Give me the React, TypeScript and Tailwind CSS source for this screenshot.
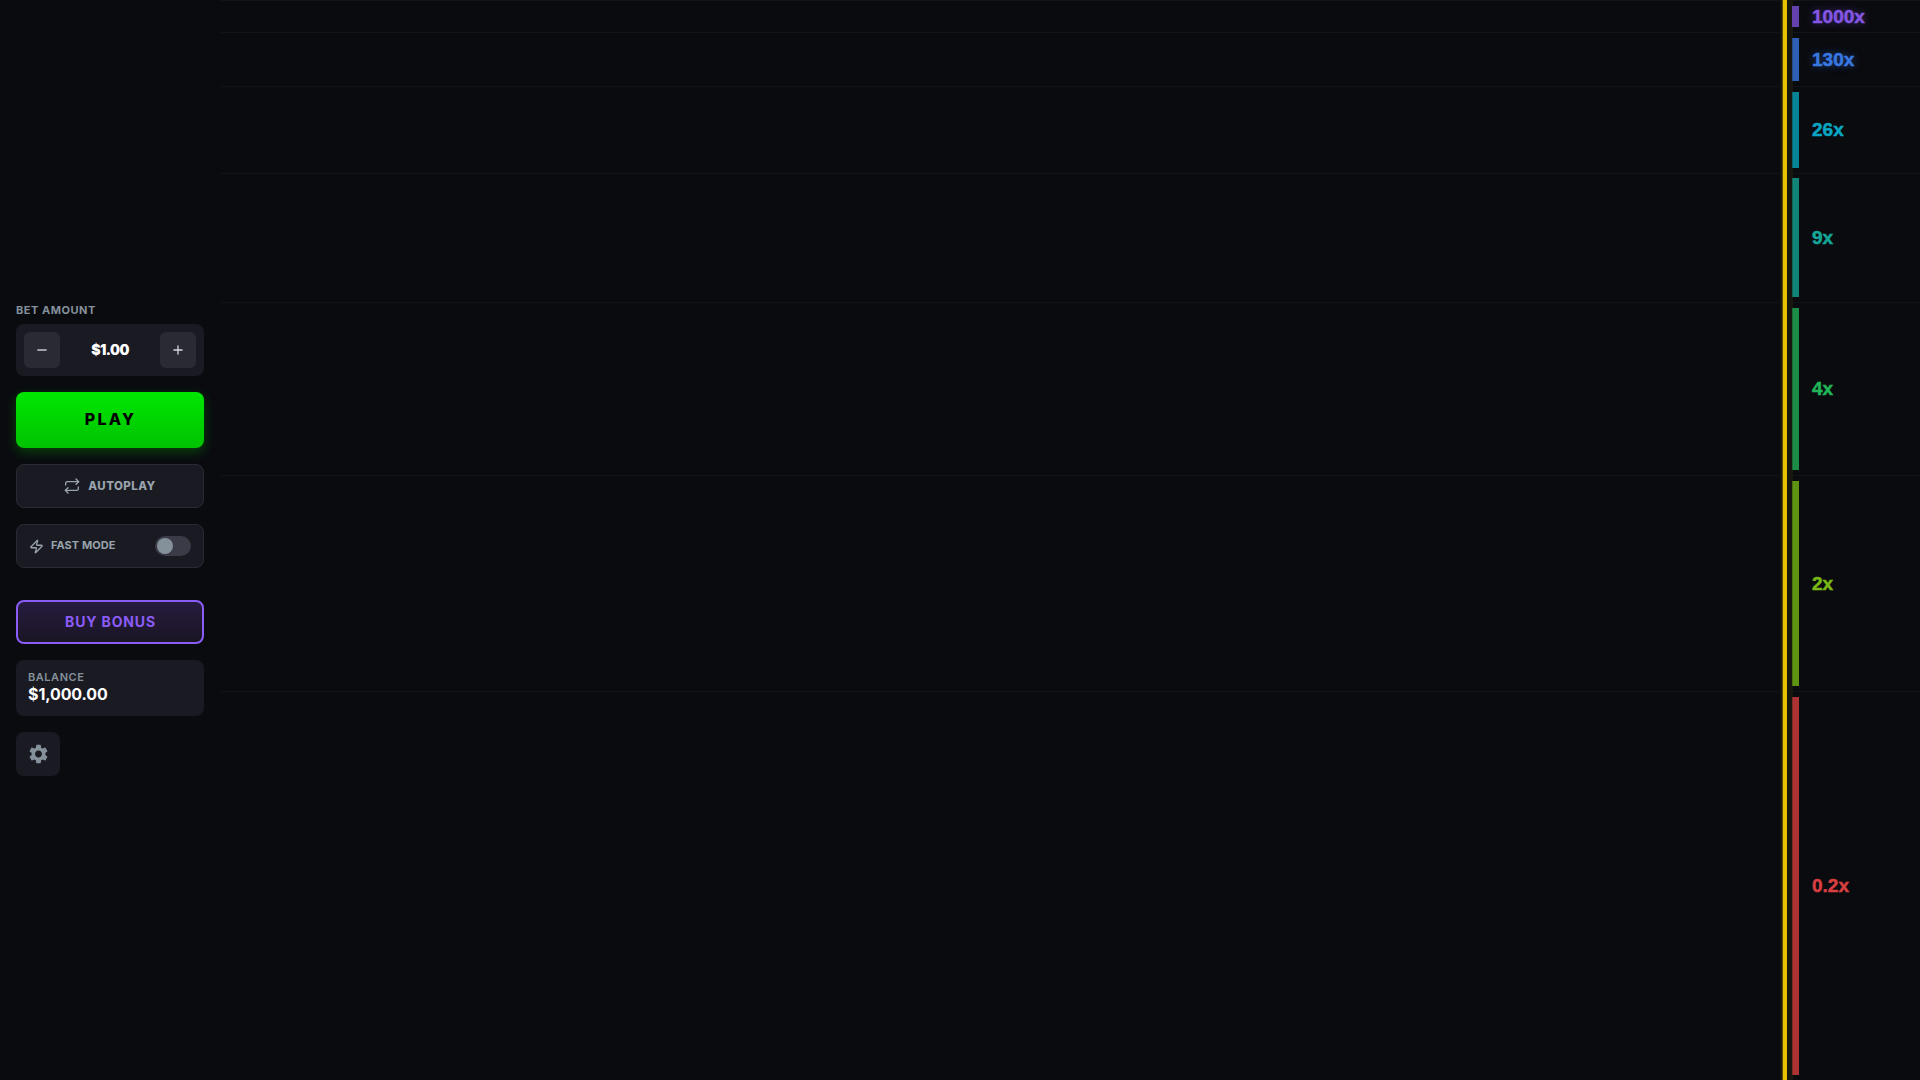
import { Minus, Plus, Zap } from 'lucide-react';
import { MdSettings } from 'react-icons/md';

const zones = [
  { label: '1000x', height: 'h-[3%]', bar: 'bg-[#6541ae]', edge: 'border-[#6541ae]', text: 'text-[#8456e4] [text-shadow:0_0_8px_#8b5cf680]' },
  { label: '130x', height: 'h-[5%]', bar: 'bg-[#2c5fb5]', edge: 'border-[#254a85]', text: 'text-[#3878e0] [text-shadow:0_0_8px_#3b82f680]' },
  { label: '26x', height: 'h-[8%]', bar: 'bg-[#078397]', edge: 'border-[#0c6470]', text: 'text-[#08a6c2]' },
  { label: '9x', height: 'h-[12%]', bar: 'bg-[#118578]', edge: 'border-[#13655a]', text: 'text-[#14a697]' },
  { label: '4x', height: 'h-[16%]', bar: 'bg-[#1b8d47]', edge: 'border-[#1b6b38]', text: 'text-[#20b557]' },
  { label: '2x', height: 'h-[20%]', bar: 'bg-[#5f9413]', edge: 'border-[#4b7113]', text: 'text-[#79b816]' },
  { label: '0.2x', height: 'h-[36%]', bar: 'bg-[#ab3334]', edge: 'border-[#7e2b2a]', text: 'text-[#d93f40]' },
];

function LoopIcon() {
  return (
    <svg width="16" height="16" viewBox="0 0 24 24" fill="none" stroke="currentColor" strokeWidth="2" strokeLinecap="round" strokeLinejoin="round">
      <path d="M18 1.5l4 4-4 4" />
      <path d="M2.500 10.500V8a2.500 2.500 0 0 1 2.500-2.500h17" />
      <path d="M6 22.500l-4-4 4-4" />
      <path d="M21.500 13.500V16a2.500 2.500 0 0 1-2.500 2.500H2" />
    </svg>
  );
}

function Sidebar() {
  return (
    <aside className="flex h-full w-[220px] shrink-0 flex-col gap-4 px-4 pt-[302px]">
      <div className="flex flex-col gap-1.5">
        <div className="h-4 whitespace-nowrap text-[11px] leading-4 font-bold tracking-[0.52px] text-[#84919b]">BET AMOUNT</div>
        <div className="flex h-[52px] items-center justify-between rounded-lg bg-[#1a1a23] px-2">
          <button className="flex size-9 items-center justify-center rounded-md bg-[#2a2a35] text-[#c8c8cc]">
            <Minus size={14} strokeWidth={2.6} />
          </button>
          <span className="pb-px text-[14px] leading-5 font-black tracking-[-0.55px] text-white">$1.00</span>
          <button className="flex size-9 items-center justify-center rounded-md bg-[#2a2a35] text-[#d8d8dc]">
            <Plus size={14} strokeWidth={2.2} />
          </button>
        </div>
      </div>
      <button className="h-14 rounded-lg bg-linear-to-b from-[#00e701] to-[#00c201] pb-0.5 pl-px text-base font-extrabold tracking-[2.2px] text-black shadow-[0_4px_12px_rgba(0,231,1,0.25)]">
        PLAY
      </button>
      <button className="flex h-11 items-center justify-center gap-2 rounded-lg border border-[#2a2a35] bg-[#1a1a23] text-[#98a3ab]">
        <LoopIcon />
        <span className="pb-px text-[11.5px] leading-4 font-extrabold tracking-[0.45px]">AUTOPLAY</span>
      </button>
      <div className="flex h-11 items-center justify-between rounded-lg border border-[#2a2a35] bg-[#1a1a23] pr-3 pl-3 text-[#98a3ab]">
        <div className="flex items-center gap-[7px]">
          <Zap size={15} strokeWidth={2.2} />
          <span className="pb-0.5 text-[11px] leading-4 font-bold tracking-[0.05px]">FAST MODE</span>
        </div>
        <div className="flex h-5 w-9 items-center rounded-full bg-[#3b3b47] px-0.5">
          <div className="size-4 rounded-full bg-[#84919b]" />
        </div>
      </div>
      <button className="mt-4 h-11 rounded-lg border-2 border-[#8b5cf6] bg-linear-to-b from-[#271b40] to-[#1a1524] pb-0.5 pl-px text-[14px] font-bold tracking-[0.85px] text-[#8b5cf6]">
        BUY BONUS
      </button>
      <div className="flex h-14 flex-col justify-center rounded-lg bg-[#1a1a23] px-3 pb-[3px]">
        <div className="text-[11px] leading-4 font-semibold tracking-[0.55px] text-[#84919b]">BALANCE</div>
        <div className="text-base leading-[19px] font-bold tracking-[-0.1px] text-white">$1,000.00</div>
      </div>
      <button className="flex size-11 items-center justify-center rounded-lg bg-[#1a1a23] text-[#84919b]">
        <MdSettings size={24} className="h-6 w-[23px]" />
      </button>
    </aside>
  );
}

function Board() {
  return (
    <main className="relative flex h-full flex-1 flex-col">
      {zones.map((z) => (
        <section key={z.label} className={`flex items-stretch border-t border-[#121318] ${z.height}`}>
          <div className="flex-1" />
          <div className="flex w-[128px] items-stretch">
            <div className={`relative z-10 mt-[4.600px] mb-[5px] w-[7px] border-l ${z.bar} ${z.edge}`} />
            <div className={`flex items-center pl-[13px] font-['Liberation_Sans',sans-serif] text-[19px] leading-5 font-bold [-webkit-text-stroke:0.5px_currentColor] ${z.text}`}>{z.label}</div>
          </div>
        </section>
      ))}
      <div className="absolute inset-y-0 right-[127px] w-[13px] bg-[#17160f]" />
      <div className="absolute inset-y-0 right-[133px] w-[5px] border-l border-[#5c4f0c] bg-[#e9c300]" />
    </main>
  );
}

export default function App() {
  return (
    <div className="flex h-screen w-full overflow-hidden bg-[#0a0b0f] font-[Inter,sans-serif]">
      <Sidebar />
      <Board />
    </div>
  );
}
